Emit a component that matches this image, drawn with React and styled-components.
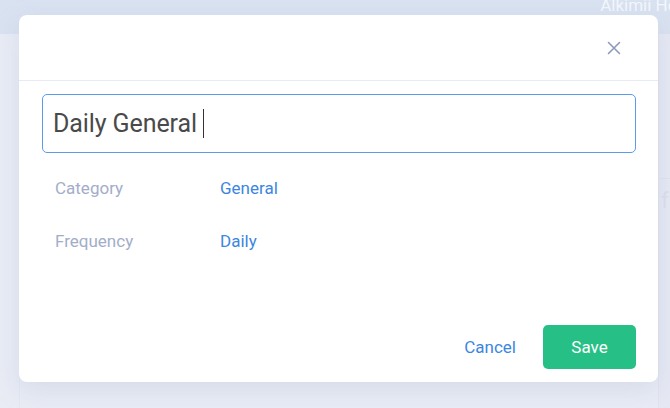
import React from "react";
import styled, { createGlobalStyle } from "styled-components";

const GlobalStyle = createGlobalStyle`
  html, body {
    margin: 0;
    padding: 0;
    height: 100%;
  }
  body {
    font-family: Roboto, "Liberation Sans", sans-serif;
    background: #e8ebf5;
    overflow: hidden;
  }
`;

const Page = styled.div`
  position: relative;
  width: 670px;
  height: 408px;
  background: #e9ecf5;
  display: flex;
  flex-direction: column;
`;

const TopBar = styled.div`
  height: 34px;
  background: #d9e2f1;
  display: flex;
  justify-content: flex-end;
  align-items: flex-start;
  overflow: hidden;
`;

const BrandText = styled.span`
  color: #f4f7fc;
  font-size: 17px;
  margin-right: -16px;
  margin-top: -5px;
  white-space: nowrap;
`;

const Backdrop = styled.div`
  flex: 1;
  display: flex;
`;

const SideColumn = styled.div`
  width: 19px;
  border-right: 1px solid #e3e7f2;
`;

const BehindCard = styled.div`
  position: absolute;
  left: 658px;
  top: 34px;
  right: 0;
  bottom: 0;
  background: #e6e9f4;
  border-left: 1px solid #e0e4f1;
  overflow: hidden;
  color: #dcdfec;
  font-size: 22px;
  &::before {
    content: "";
    position: absolute;
    left: 0;
    right: 0;
    top: 144px;
    border-top: 1px solid #dfe3ef;
  }
  span {
    position: absolute;
    left: 2px;
    top: 154px;
  }
`;

const Modal = styled.div`
  position: absolute;
  left: 19px;
  top: 15px;
  width: 639px;
  height: 367px;
  background: #ffffff;
  border-radius: 8px;
  box-shadow: 0 8px 24px rgba(160, 170, 205, 0.25);
  display: flex;
  flex-direction: column;
`;

const Header = styled.div`
  height: 65px;
  border-bottom: 1px solid #e6eaf4;
  display: flex;
  justify-content: flex-end;
  align-items: center;
  padding-right: 37px;
`;

const CloseButton = styled.button`
  border: none;
  background: none;
  padding: 0;
  width: 14px;
  height: 14px;
  cursor: pointer;
  display: flex;
`;

const Body = styled.div`
  flex: 1;
  padding: 13px 22px 13px 23px;
  display: flex;
  flex-direction: column;
`;

const TitleInput = styled.div`
  height: 57px;
  border: 1px solid #5b9bea;
  border-radius: 5px;
  display: flex;
  align-items: center;
  padding: 0 10px;
  font-size: 25px;
  color: #4a4a4a;
  letter-spacing: -0.1px;
`;

const Caret = styled.span`
  display: inline-block;
  width: 1px;
  height: 29px;
  background: #333;
  margin-left: 6px;
`;

const Fields = styled.div`
  padding: 25px 0 0 13px;
  display: flex;
  flex-direction: column;
  gap: 33px;
`;

const FieldRow = styled.div`
  display: grid;
  grid-template-columns: 165px 1fr;
  font-size: 17px;
  line-height: 20px;
`;

const FieldLabel = styled.span`
  color: #a3adc9;
`;

const FieldValue = styled.span`
  color: #3c86e0;
`;

const Footer = styled.div`
  margin-top: auto;
  display: flex;
  justify-content: flex-end;
  align-items: center;
  gap: 27px;
`;

const CancelButton = styled.button`
  border: none;
  background: none;
  padding: 0;
  font-family: inherit;
  font-size: 17px;
  color: #3c86e0;
  cursor: pointer;
`;

const SaveButton = styled.button`
  width: 93px;
  height: 44px;
  border: none;
  border-radius: 5px;
  background: #26c086;
  color: #ffffff;
  font-family: inherit;
  font-size: 17px;
  cursor: pointer;
`;

export default function App() {
  return (
    <>
      <GlobalStyle />
      <Page>
        <TopBar>
          <BrandText>Alkimii Hea</BrandText>
        </TopBar>
        <Backdrop>
          <SideColumn />
        </Backdrop>
        <BehindCard>
          <span>fr</span>
        </BehindCard>
        <Modal>
          <Header>
            <CloseButton aria-label="Close">
              <svg width="14" height="14" viewBox="0 0 14 14">
                <path
                  d="M1.5 1.5 L12.5 12.5 M12.5 1.5 L1.5 12.5"
                  stroke="#8e9aba"
                  strokeWidth="1.6"
                  strokeLinecap="round"
                />
              </svg>
            </CloseButton>
          </Header>
          <Body>
            <TitleInput>
              Daily General
              <Caret />
            </TitleInput>
            <Fields>
              <FieldRow>
                <FieldLabel>Category</FieldLabel>
                <FieldValue>General</FieldValue>
              </FieldRow>
              <FieldRow>
                <FieldLabel>Frequency</FieldLabel>
                <FieldValue>Daily</FieldValue>
              </FieldRow>
            </Fields>
            <Footer>
              <CancelButton>Cancel</CancelButton>
              <SaveButton>Save</SaveButton>
            </Footer>
          </Body>
        </Modal>
      </Page>
    </>
  );
}
